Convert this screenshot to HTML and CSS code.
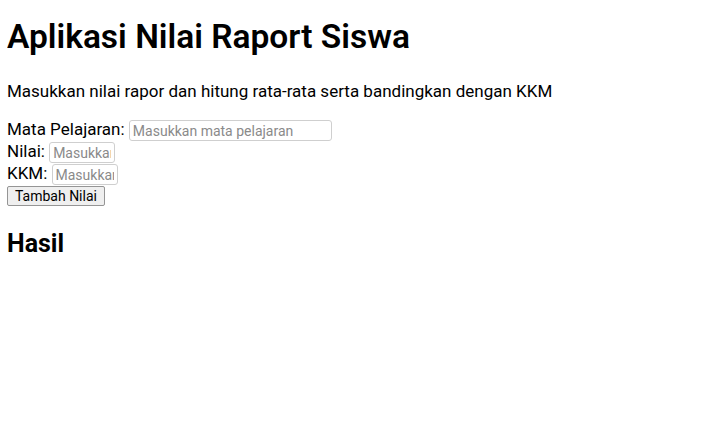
FILE: index.html
```html
<!DOCTYPE html>
<html lang="id">
<head>
<meta charset="utf-8">
<title>Aplikasi Nilai Raport Siswa</title>
<link rel="stylesheet" href="styles.css">
</head>
<body>
<h1 class="title">Aplikasi Nilai Raport Siswa</h1>
<p class="intro">Masukkan nilai rapor dan hitung rata-rata serta bandingkan dengan KKM</p>
<form class="form">
<label class="field">Mata Pelajaran: <input class="input input-wide" type="text" placeholder="Masukkan mata pelajaran"></label><br>
<label class="field">Nilai: <input class="input input-num" type="number" placeholder="Masukkan nilai"></label><br>
<label class="field">KKM: <input class="input input-num" type="number" placeholder="Masukkan KKM"></label><br>
<button class="btn" type="button">Tambah Nilai</button>
</form>
<h2 class="result-title">Hasil</h2>
<div class="result"></div>
</body>
</html>
```
FILE: styles.css
```css
html, body {
  background: #ffffff;
}
body {
  margin: 7px;
  font-family: Roboto, "Liberation Sans", sans-serif;
  font-size: 17px;
  color: #000;
}
.title {
  font-size: 33.5px;
  font-weight: 600;
  margin: 10px 0 25px;
}
.intro {
  margin: 17px 0 18px;
}
.form {
  margin: 0;
  line-height: 21px;
}
.input {
  font-family: Roboto, "Liberation Sans", sans-serif;
  font-size: 14px;
  padding: 1px 3px;
  border: 1px solid #cfcfcf;
  border-radius: 3px;
  box-sizing: border-box;
  height: 21px;
  color: #000;
  vertical-align: middle;
}
.input::placeholder {
  color: #8a8a8a;
}
.input::-webkit-inner-spin-button,
.input::-webkit-outer-spin-button {
  -webkit-appearance: none;
  margin: 0;
}
.input-wide {
  width: 203px;
}
.input-num {
  width: 66px;
  -moz-appearance: textfield;
}
.btn {
  font-family: Roboto, "Liberation Sans", sans-serif;
  font-size: 14px;
  line-height: normal;
  padding: 1px 7px;
  border: 1px solid #959595;
  border-radius: 2px;
  background: #efefef;
  color: #000;
}
.result-title {
  font-size: 25px;
  margin: 23px 0 18px;
}
```
